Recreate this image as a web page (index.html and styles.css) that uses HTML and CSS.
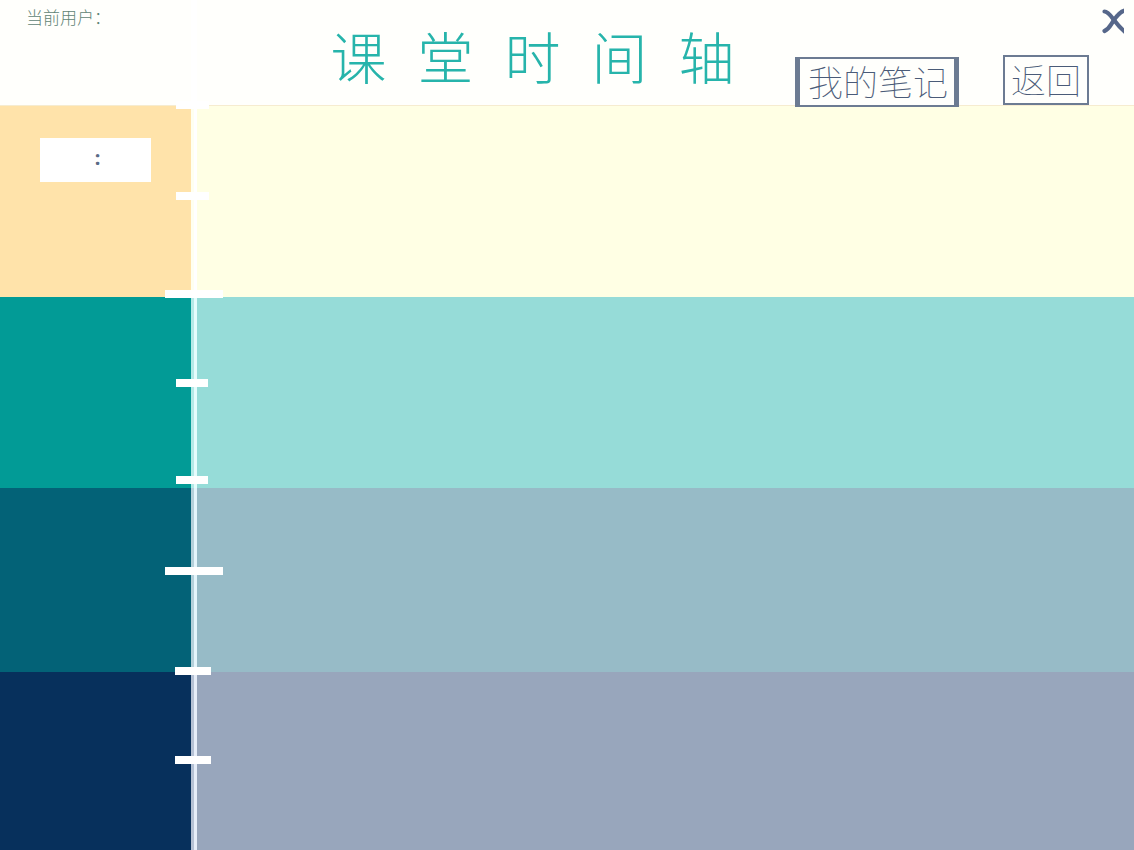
FILE: index.html
```html
<!DOCTYPE html>
<html lang="zh-CN">
<head>
<meta charset="utf-8">
<title>课堂时间轴</title>
<link rel="stylesheet" href="styles.css">
</head>
<body>
<div class="page">
  <header class="header">
    <p class="user">当前用户：</p>
    <h1 class="title"><span>课</span> <span>堂</span> <span>时</span> <span>间</span> <span>轴</span></h1>
    <nav class="actions">
      <button class="btn btn-notes" type="button">我的笔记</button>
      <button class="btn btn-back" type="button">返回</button>
    </nav>
    <button class="close" type="button" aria-label="关闭">
      <svg width="22" height="28" viewBox="0 0 22 28" fill="none" stroke="#56678a" stroke-width="4.200" stroke-linecap="round">
        <path d="M2.500 4.500C6 4.500 9 9 12 13S17 20 23 25"/>
        <path d="M23 3.500C17 5 14 10 11 14.500S7 22 2.500 24"/>
      </svg>
    </button>
  </header>
  <main class="timeline">
    <section class="band band-1">
      <div class="side"><div class="clock">:</div></div>
      <div class="axis"></div>
      <div class="content"></div>
      <i class="tick tick-a"></i><i class="tick tick-b"></i><i class="tick tick-c tick-long"></i>
    </section>
    <section class="band band-2">
      <div class="side"></div>
      <div class="axis"></div>
      <div class="content"></div>
      <i class="tick tick-a"></i><i class="tick tick-b"></i>
    </section>
    <section class="band band-3">
      <div class="side"></div>
      <div class="axis"></div>
      <div class="content"></div>
      <i class="tick tick-a tick-long"></i>
    </section>
    <section class="band band-4">
      <div class="side"></div>
      <div class="axis"></div>
      <div class="content"></div>
      <i class="tick tick-a"></i><i class="tick tick-b"></i>
    </section>
  </main>
</div>
</body>
</html>
```
FILE: styles.css
```css
* { box-sizing: border-box; }

body {
  margin: 0;
  font-family: "Noto Sans CJK SC", sans-serif;
  font-weight: 100;
  background: #fffffc;
}

.page {
  display: flex;
  flex-direction: column;
  min-height: 100vh;
}

.header {
  display: flex;
  align-items: flex-start;
  min-height: 105px;
  background: linear-gradient(to right, transparent 191px, #ffffff 191px, #ffffff 197px, transparent 197px);
}

.user {
  flex: 1 1 0;
  margin: 0;
  padding: 5px 0 0 26px;
  font-size: 17px;
  line-height: 24px;
  font-weight: 300;
  white-space: nowrap;
  color: #5f8475;
}

.title {
  display: flex;
  gap: 31px;
  margin: 0 50px 0 0;
  padding-top: 21px;
  font-size: 56px;
  line-height: 68px;
  font-weight: 300;
  color: #27b4ab;
}

.actions {
  flex: 1 1 0;
  display: flex;
  justify-content: flex-end;
  align-items: flex-start;
  gap: 44px;
  margin-bottom: -4px;
}

.btn {
  font: inherit;
  font-size: 35px;
  line-height: 44px;
  color: #4a5b78;
  background: #fffffc;
  border: 2px solid #6c7b92;
  white-space: nowrap;
  cursor: pointer;
  position: relative;
  z-index: 2;
}

.btn-notes {
  margin-top: 57px;
  padding: 0 6px 2px 8px;
  border-width: 2px 5px;
}

.btn-back {
  margin-top: 55px;
  padding: 0 6px 2px;
}

.close {
  margin: 7px 10px 0 13px;
  padding: 0;
  border: 0;
  background: none;
  cursor: pointer;
}

.close svg { display: block; }

.timeline {
  flex: 1;
  display: grid;
  grid-template-rows: 192fr 191fr 184fr 178fr;
}

.band {
  display: grid;
  grid-template-columns: 191px 6px 1fr;
  position: relative;
}

.band-1 { background: #ffffe4; border-top: 1px solid #f6ecd0; }
.band-2 { background: #96dcd8; }
.band-3 { background: #97bbc7; }
.band-4 { background: #98a6bc; }

.band-1 .side { background: #ffe3aa; }
.band-2 .side { background: #029b96; }
.band-3 .side { background: #036277; }
.band-4 .side { background: #07305c; }

.axis {
  border-left: 3px solid #b5c1d4;
  background: #e6edf8;
}

.band-1 .axis { border-color: #fffff0; background: #ffffff; }
.band-2 .axis { border-color: #b5e9e7; background: #e5fcfc; }
.band-3 .axis { border-color: #b4d0da; background: #e4f5fb; }

.clock {
  margin: 32px 40px 0;
  padding-left: 4px;
  height: 44px;
  font: bold 20px/40px "Noto Sans", sans-serif;
  text-align: center;
  color: #5a6b87;
  background: #ffffff;
}

.tick {
  position: absolute;
  left: 176px;
  z-index: 1;
  width: 33px;
  height: 8px;
  background: #ffffff;
}

.tick-long { left: 165px; width: 58px; }

.band-1 .tick-a { top: -5px; }
.band-1 .tick-b { top: 45%; }
.band-1 .tick-c { bottom: -1px; }
.band-2 .tick { width: 32px; }
.band-2 .tick-a { top: 43%; }
.band-2 .tick-b { bottom: 4px; }
.band-3 .tick-a { top: 43%; }
.band-4 .tick { left: 175px; width: 36px; }
.band-4 .tick-a { top: -5px; }
.band-4 .tick-b { top: 47%; }
```
